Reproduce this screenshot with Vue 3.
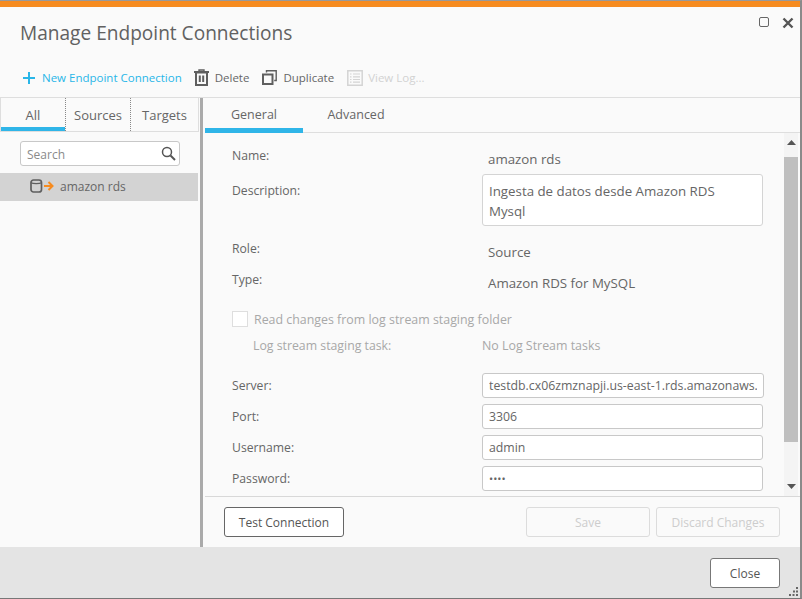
<template>
  <div class="dialog">
    <div class="accent"></div>
    <div class="title-row">
      <h1>Manage Endpoint Connections</h1>
      <div class="window-btns">
        <span class="max-btn"></span>
        <svg class="close-x" width="12" height="12" viewBox="0 0 12 12"><path d="M1.500 1.500l9 9M10.500 1.500l-9 9" stroke="#555" stroke-width="2.400" fill="none"/></svg>
      </div>
    </div>

    <div class="toolbar">
      <button class="tool tool-new">
        <svg width="14" height="14" viewBox="0 0 14 14"><path d="M7 1v12M1 7h12" stroke="#29b6e8" stroke-width="2" fill="none"/></svg>
        <span>New Endpoint Connection</span>
      </button>
      <button class="tool tool-delete">
        <svg width="15" height="17" viewBox="0 0 15 17" fill="none" stroke="#5f5f5f"><path d="M0 3h15" stroke-width="2"/><path d="M5 2.500V1h5v1.500" stroke-width="1.400"/><path d="M2 3.500h11V16H2z" stroke-width="2"/><path d="M5.800 6.500v6.500M9.200 6.500v6.500" stroke-width="2"/></svg>
        <span>Delete</span>
      </button>
      <button class="tool tool-dup">
        <svg width="15" height="15" viewBox="0 0 15 15" fill="none" stroke="#5f5f5f"><path d="M1 4.500h9.500V14H1z" stroke-width="2"/><path d="M4.500 2.500V.8h9.700v9.700h-2" stroke-width="1.400"/></svg>
        <span>Duplicate</span>
      </button>
      <button class="tool tool-log">
        <svg width="16" height="16" viewBox="0 0 16 16" fill="none" stroke="#d4d4d4"><path d="M.8.800h14.400v14.400H.8z" stroke-width="1.500"/><path d="M3 4h1.500M6 4h7M3 6.800h1.500M6 6.800h7M3 9.500h1.500M6 9.500h7M3 12.200h1.500M6 12.200h7" stroke-width="1.200"/></svg>
        <span>View Log...</span>
      </button>
    </div>

    <div class="main">
      <aside class="sidebar">
        <div class="side-tabs">
          <div class="side-tab active">All</div>
          <div class="side-tab">Sources</div>
          <div class="side-tab">Targets</div>
        </div>
        <div class="search">
          <span>Search</span>
          <svg width="15" height="15" viewBox="0 0 15 15" fill="none" stroke="#555"><circle cx="6" cy="6" r="4.500" stroke-width="1.500"/><path d="M9.500 9.500l4.500 4.500" stroke-width="2"/></svg>
        </div>
        <div class="endpoint">
          <svg width="24" height="14" viewBox="0 0 24 14" fill="none">
            <rect x="1" y="1" width="10.500" height="12" rx="2.500" stroke="#5f5f5f" stroke-width="1.700"/>
            <path d="M1 3.800c2 1.200 8.500 1.200 10.500 0" stroke="#5f5f5f" stroke-width="1.300"/>
            <path d="M14 7h8M18.500 3l4 4-4 4" stroke="#f68b1f" stroke-width="2"/>
          </svg>
          <span>amazon rds</span>
        </div>
      </aside>

      <div class="splitter"></div>

      <section class="detail">
        <div class="detail-tabs">
          <div class="detail-tab active">General</div>
          <div class="detail-tab">Advanced</div>
        </div>

        <div class="scroll-area">
          <div class="form">
            <div class="row row-name">
              <label>Name:</label>
              <div class="value">amazon rds</div>
            </div>
            <div class="row row-desc">
              <label>Description:</label>
              <div class="textarea">Ingesta de datos desde Amazon RDS Mysql</div>
            </div>
            <div class="row row-role">
              <label>Role:</label>
              <div class="value">Source</div>
            </div>
            <div class="row row-type">
              <label>Type:</label>
              <div class="value">Amazon RDS for MySQL</div>
            </div>
            <div class="check-row">
              <span class="checkbox"></span>
              <span>Read changes from log stream staging folder</span>
            </div>
            <div class="row row-log">
              <label>Log stream staging task:</label>
              <div class="value value-off">No Log Stream tasks</div>
            </div>
            <div v-for="f in fields" :key="f.label" class="row row-field">
              <label>{{ f.label }}</label>
              <div class="input" :class="{ dots: f.dots }"><span>{{ f.value }}</span></div>
            </div>
          </div>
          <div class="scrollbar">
            <svg width="9" height="5" viewBox="0 0 9 5"><path d="M4.500 0L9 5H0z" fill="#555"/></svg>
            <div class="track"><div class="thumb"></div></div>
            <svg width="9" height="5" viewBox="0 0 9 5"><path d="M4.500 5L9 0H0z" fill="#555"/></svg>
          </div>
        </div>

        <div class="detail-actions">
          <button class="btn">Test Connection</button>
          <div class="right-actions">
            <button class="btn btn-save" disabled>Save</button>
            <button class="btn btn-discard" disabled>Discard Changes</button>
          </div>
        </div>
      </section>
    </div>

    <div class="footer">
      <button class="btn btn-close">Close</button>
      <svg class="grip" width="9" height="9" viewBox="0 0 9 9" fill="#666"><path d="M7 0h2v2H7zM4 3.500h2v2H4zM7 3.500h2v2H7zM0 7h2v2H0zM3.500 7h2v2h-2zM7 7h2v2H7z"/></svg>
    </div>
  </div>
</template>

<script setup>
const fields = [
  { label: 'Server:', value: 'testdb.cx06zmznapji.us-east-1.rds.amazonaws.com' },
  { label: 'Port:', value: '3306' },
  { label: 'Username:', value: 'admin' },
  { label: 'Password:', value: '••••', dots: true }
]
</script>

<style scoped>
.dialog {
  width: 802px;
  height: 599px;
  box-sizing: border-box;
  display: flex;
  flex-direction: column;
  background: #fafafa;
  border-top: 1px solid #999;
  border-right: 2px solid #8a8a8a;
  border-bottom: 1px solid #777;
  font-family: "Open Sans", "Noto Sans", sans-serif;
  font-size: 12px;
  color: #666;
  overflow: hidden;
}

.accent {
  height: 6px;
  background: #f68b1f;
  flex: none;
}

.title-row {
  height: 51px;
  flex: none;
  display: flex;
  justify-content: space-between;
  box-sizing: border-box;
  padding: 0 6px 0 20px;
}

h1 {
  margin: 11px 0 0;
  font-size: 19.100px;
  line-height: 30px;
  font-weight: 400;
  color: #616161;
}

.window-btns {
  display: flex;
  gap: 13px;
  padding-top: 10px;
  align-items: flex-start;
}

.max-btn {
  width: 8px;
  height: 8px;
  border: 1px solid #666;
  border-radius: 2px;
}

.toolbar {
  height: 40px;
  flex: none;
  display: flex;
  align-items: center;
  padding-left: 22px;
  box-sizing: border-box;
  border-bottom: 1px solid #dedede;
}

button {
  font-family: inherit;
}

.tool {
  display: flex;
  align-items: center;
  border: none;
  background: none;
  padding: 0;
  font-size: 11.500px;
  color: #666;
}

.tool-new {
  gap: 6px;
  color: #29b6e8;
  margin-right: 12px;
}

.tool-delete {
  gap: 6px;
  margin-right: 13px;
}

.tool-dup {
  gap: 6px;
  margin-right: 13px;
}

.tool-log {
  gap: 5px;
  color: #d2d2d2;
}

.main {
  height: 449px;
  flex: none;
  display: flex;
}

.sidebar {
  width: 199px;
  flex: none;
}

.side-tabs {
  height: 34px;
  display: flex;
  box-sizing: border-box;
  border-bottom: 1px solid #dedede;
  border-right: 1px solid #dedede;
  border-left: 1px solid #dedede;
}

.side-tab {
  width: 65px;
  box-sizing: border-box;
  text-align: center;
  line-height: 34px;
  font-size: 13px;
  color: #666;
  border-right: 1px dotted #888;
}

.side-tab:last-child {
  border-right: none;
  flex: 1;
}

.side-tab.active {
  box-shadow: inset 0 -4px 0 #2fb5e8;
}

.search {
  width: 160px;
  height: 25px;
  box-sizing: border-box;
  margin: 9px 0 7px 20px;
  padding: 1px 3px 0 6px;
  display: flex;
  align-items: center;
  justify-content: space-between;
  background: #fff;
  border: 1px solid #c8c8c8;
  border-radius: 3px;
  color: #8a8a8a;
}

.search svg {
  margin-top: -1px;
}

.endpoint {
  width: 198px;
  height: 28px;
  padding: 0 0 2px 30px;
  box-sizing: border-box;
  display: flex;
  align-items: center;
  gap: 6px;
  background: #d3d3d3;
  color: #666;
}

.splitter {
  width: 3px;
  margin-left: 1px;
  background: #aaa;
  flex: none;
}

.detail {
  flex: 1;
  min-width: 0;
  display: flex;
  flex-direction: column;
  margin-left: 2px;
}

.detail-tabs {
  height: 35px;
  flex: none;
  display: flex;
  box-shadow: inset 0 -1px 0 #dedede;
}

.detail-tab {
  width: 98px;
  text-align: center;
  line-height: 34px;
  font-size: 12.500px;
  color: #666;
}

.detail-tab.active {
  box-shadow: inset 0 -5px 0 #2fb5e8;
}

.detail-tab + .detail-tab {
  width: 106px;
}

.scroll-area {
  height: 363px;
  flex: none;
  display: flex;
  border-bottom: 1px solid #d8d8d8;
  overflow: hidden;
}

.form {
  flex: 1;
  min-width: 0;
  padding: 13px 21px 0 27px;
}

.row {
  display: flex;
  align-items: flex-start;
}

.row label {
  width: 250px;
  flex: none;
  padding-top: 1px;
  color: #666;
  line-height: 18px;
  font-size: 12.200px;
}

.value {
  padding-left: 6px;
  font-size: 13.300px;
  line-height: 18px;
  color: #666;
  padding-top: 4px;
}

.row-desc {
  height: 52px;
}

.row-desc label {
  padding-top: 8px;
}

.textarea {
  width: 282px;
  height: 52px;
  box-sizing: border-box;
  padding: 6px 10px 5px 6px;
  background: #fff;
  border: 1px solid #d4d4d4;
  border-radius: 3px;
  font-size: 13.300px;
  line-height: 20px;
  color: #666;
}

.row-name {
  height: 28px;
}

.row-role {
  margin-top: 13px;
  height: 31px;
}

.row-type {
  height: 31px;
}

.check-row {
  margin-top: 10px;
  display: flex;
  align-items: center;
  gap: 6px;
  height: 16px;
  color: #a8a8a8;
  font-size: 12.400px;
}

.checkbox {
  width: 16px;
  height: 16px;
  box-sizing: border-box;
  background: #fff;
  border: 1px solid #dedede;
}

.row-log {
  margin-top: 10px;
  height: 32px;
  padding-left: 21px;
}

.row-log label {
  width: 229px;
  padding-top: 0;
  color: #a8a8a8;
  font-size: 12.300px;
}

.row-log .value {
  padding: 0;
  font-size: 12.400px;
  color: #a8a8a8;
}

.row-field {
  align-items: center;
  height: 25px;
  margin-bottom: 6px;
}

.row-field label {
  padding-top: 0;
}

.row-log + .row-field {
  margin-top: 4px;
}

.input {
  width: 282px;
  height: 25px;
  box-sizing: border-box;
  padding: 0 6px;
  background: #fff;
  border: 1px solid #c8c8c8;
  border-radius: 3px;
  font-size: 12.300px;
  line-height: 23px;
  color: #666;
}

.input span {
  display: block;
  overflow: hidden;
  white-space: nowrap;
}

.input.dots {
  font-size: 11px;
}

.scrollbar {
  width: 14px;
  margin-right: 2px;
  flex: none;
  display: flex;
  flex-direction: column;
  align-items: center;
  padding-top: 7px;
  box-sizing: border-box;
  background: #f4f4f4;
}

.track {
  width: 100%;
  flex: 1;
  padding-top: 12px;
  box-sizing: border-box;
}

.thumb {
  height: 285px;
  background: #bfbfbf;
}

.scrollbar svg:last-child {
  margin-bottom: 7px;
}

.detail-actions {
  flex: 1;
  display: flex;
  justify-content: space-between;
  align-items: flex-start;
  padding: 10px 20px 0 19px;
}

.right-actions {
  display: flex;
  gap: 6px;
}

.btn {
  height: 30px;
  box-sizing: border-box;
  background: #fff;
  border: 1px solid #666;
  border-radius: 3px;
  font-size: 12px;
  color: #555;
  padding: 0;
}

.detail-actions > .btn {
  width: 120px;
}

.btn-save,
.btn-discard {
  width: 124px;
  background: #fafafa;
  border-color: #dcdcdc;
  color: #cdcdcd;
}

.footer {
  flex: 1;
  position: relative;
  display: flex;
  justify-content: flex-end;
  align-items: flex-start;
  padding: 11px 20px 0 0;
  background: #e4e4e4;
}

.btn-close {
  width: 70px;
  border-color: #777;
}

.grip {
  position: absolute;
  right: 2px;
  bottom: 2px;
}
</style>

<style>
html, body {
  margin: 0;
  overflow: hidden;
}
</style>
